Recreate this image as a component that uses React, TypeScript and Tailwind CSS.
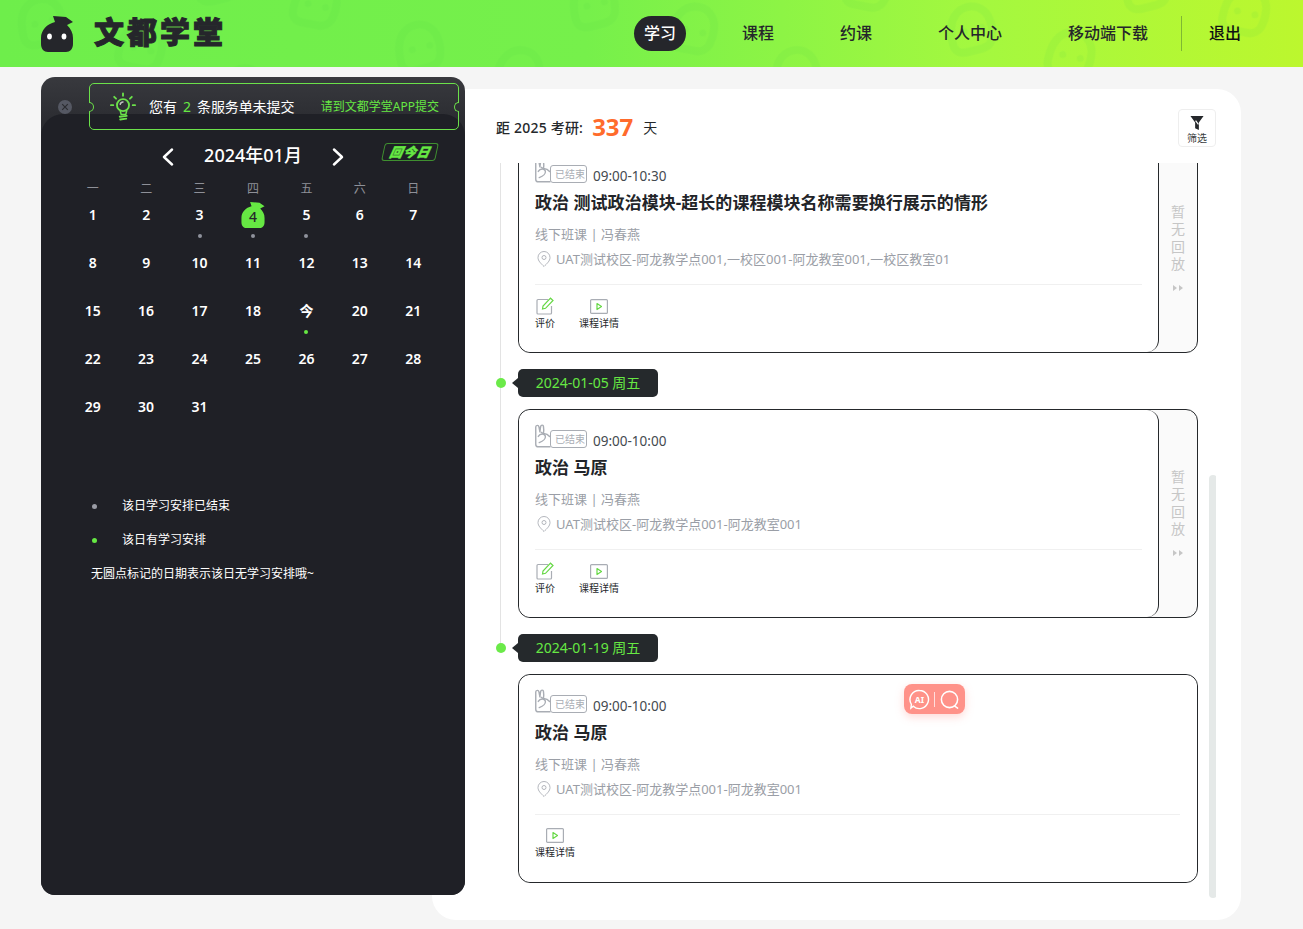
import React from "react";

const FONT = "font-['Noto_Sans','Noto_Sans_CJK_SC',sans-serif]";

const BLOB = "M12 0 L25 1 L32 6 L26 9 C30 13 32 17 32 22 L32 28 C32 33 29 36 25 36 L7 36 C3 36 0 33 0 28 L0 22 C0 14 6 8 14 6 Z";

function Blob({ className, fill, eyes }: { className: string; fill: string; eyes?: boolean }) {
  return (
    <svg viewBox="0 0 32 36" className={className}>
      <path d={BLOB} fill={fill} />
      {eyes && (
        <>
          <ellipse cx="8.5" cy="20.5" rx="2.4" ry="3" fill="#fff" />
          <ellipse cx="23" cy="20.5" rx="2.4" ry="3" fill="#fff" />
        </>
      )}
    </svg>
  );
}

function HeaderPattern() {
  return (
    <svg className="absolute inset-0 w-full h-full pointer-events-none" aria-hidden="true">
      <defs>
        <pattern id="blobs" width="180" height="116" patternUnits="userSpaceOnUse" patternTransform="rotate(-14)">
          <g fill="none" stroke="#4fd04a" strokeOpacity="0.1" strokeWidth="6">
            <g transform="translate(14 4) scale(1.35)">
              <path d="M6 8 C12 2 22 2 27 8 C31 12 32 20 30 28 C29 33 25 36 20 36 L8 36 C3 36 0 33 0 28 C0 20 2 12 6 8 Z" />
            </g>
            <g transform="translate(118 46) rotate(25) scale(1.35)">
              <path d="M6 8 C12 2 22 2 27 8 C31 12 32 20 30 28 C29 33 25 36 20 36 L8 36 C3 36 0 33 0 28 C0 20 2 12 6 8 Z" />
            </g>
          </g>
          <g fill="#4fd04a" fillOpacity="0.1">
            <circle cx="28" cy="32" r="3.5" />
            <circle cx="46" cy="32" r="3.5" />
            <circle cx="118" cy="78" r="3.5" />
            <circle cx="134" cy="86" r="3.5" />
          </g>
        </pattern>
      </defs>
      <rect width="100%" height="100%" fill="url(#blobs)" />
    </svg>
  );
}

function Header() {
  const items = ["课程", "约课", "个人中心", "移动端下载"];
  return (
    <header className="relative h-[67px] shrink-0 overflow-hidden bg-[linear-gradient(90deg,#6eee4b_0%,#76f04b_45%,#a4f83f_75%,#bcf72e_100%)]">
      <HeaderPattern />
      <div className="relative flex h-full items-center pl-[41px] pr-[62px]">
        <Blob className="h-[36px] w-[32px]" fill="#25262b" eyes />
        <span className="mb-[3px] ml-[21px] text-[30px] leading-none font-black tracking-[3px] text-[#25262b] [-webkit-text-stroke:1px_#25262b]">文都学堂</span>
        <nav className="mb-[1px] ml-auto flex items-center text-[16px] font-medium text-[#25262b]">
          <span className="flex h-[35px] w-[52px] items-center justify-center rounded-[18px] bg-[#25262b] text-white">学习</span>
          <div className="ml-[56px] flex gap-[66px]">
            {items.map((t) => (
              <span key={t}>{t}</span>
            ))}
          </div>
          <span className="ml-[33px] h-[35px] w-px bg-[#7fb832]" />
          <span className="ml-[27px] text-[#111]">退出</span>
        </nav>
      </div>
    </header>
  );
}

function Bulb() {
  return (
    <svg viewBox="0 0 28 32" className="h-[30px] w-[26px]" fill="none" stroke="#6be14a" strokeWidth="1.6" strokeLinecap="round">
      <circle cx="14" cy="14" r="6.5" strokeWidth="2" />
      <path d="M11 20 L12 24 L17 24 L18 20" />
      <path d="M10.5 26.5 L18 25.5 M11 29.5 L17.5 28.5" strokeWidth="2" />
      <path d="M14 1.5 V4 M4.5 5 L6.5 7 M23.5 5 L21.5 7 M1 14 H3.5 M24.5 14 H27" strokeWidth="2" />
      <path d="M11 13 C11.5 11 13 10.5 14 10.5" stroke="#fff" strokeOpacity="0.7" />
    </svg>
  );
}

function Chevron({ flip }: { flip?: boolean }) {
  return (
    <svg viewBox="0 0 14 18" className={`h-[18px] w-[14px] ${flip ? "rotate-180" : ""}`} fill="none" stroke="#fff" strokeWidth="2.4" strokeLinecap="round" strokeLinejoin="round">
      <path d="M11 1.5 L3 9 L11 16.5" />
    </svg>
  );
}

const WEEK = ["一", "二", "三", "四", "五", "六", "日"];
const DAYS = Array.from({ length: 31 }, (_, i) => i + 1);

function Day({ d }: { d: number }) {
  const grey = d === 3 || d === 4 || d === 5;
  return (
    <div className="relative flex h-[48px] justify-center pt-[1px]">
      {d === 4 ? (
        <div className="relative h-[26px] w-[24px] -mt-[1px]">
          <Blob className="h-[26px] w-[24px]" fill="#66e843" />
          <span className="absolute inset-0 flex items-center justify-center pt-[3px] text-[14px] font-medium text-[#25262b]">4</span>
        </div>
      ) : (
        <span className="text-[14px] leading-[24px] font-semibold text-white">{d === 19 ? "今" : d}</span>
      )}
      {grey && <span className="absolute left-1/2 top-[32px] h-[4px] w-[4px] -translate-x-1/2 rounded-full bg-[#8f929c]" />}
      {d === 19 && <span className="absolute left-1/2 top-[32px] h-[4px] w-[4px] -translate-x-1/2 rounded-full bg-[#66e843]" />}
    </div>
  );
}

function LeftPanel() {
  return (
    <aside className="relative z-10 flex h-[818px] w-[424px] shrink-0 flex-col overflow-hidden rounded-[14px] bg-[linear-gradient(180deg,#38393e_0%,#2b2c31_45px)]">
      <div className="flex h-[37px] shrink-0" />
      <div className="flex-1 rounded-t-[22px] bg-[#1f2026] px-[25px]">
        <div className="relative flex h-[53px] items-end justify-center">
          <button className="mr-[29px] mb-[1px]"><Chevron /></button>
          <span className="text-[18px] leading-[24px] font-medium text-white">2024年01月</span>
          <button className="ml-[29px] mb-[1px]"><Chevron flip /></button>
          <span className="absolute right-[3px] bottom-[6px] flex h-[18px] w-[54px] -skew-x-12 items-center justify-center rounded-[3px] border border-[#3f8f30] text-[13px] leading-none font-black italic tracking-[0.5px] text-[#66e843] [-webkit-text-stroke:0.4px_#66e843]">回今日</span>
        </div>
        <div className="mt-[13px] grid grid-cols-7 text-center text-[12px] leading-[18px] text-[#8e9098]">
          {WEEK.map((w) => (
            <span key={w}>{w}</span>
          ))}
        </div>
        <div className="mt-[4px] grid grid-cols-7">
          {DAYS.map((d) => (
            <Day key={d} d={d} />
          ))}
        </div>
        <div className="mt-[55px] flex flex-col pl-[25px] text-[12px] leading-[18px] text-white">
          <div className="flex items-center">
            <span className="ml-[1px] h-[5px] w-[5px] rounded-full bg-[#9a9ca5]" />
            <span className="ml-[25px]">该日学习安排已结束</span>
          </div>
          <div className="mt-[16px] flex items-center">
            <span className="ml-[1px] h-[5px] w-[5px] rounded-full bg-[#66e843]" />
            <span className="ml-[25px]">该日有学习安排</span>
          </div>
          <div className="mt-[16px]">无圆点标记的日期表示该日无学习安排哦~</div>
        </div>
      </div>
      {/* 通知条压在面板之上 */}
      <div className="absolute left-[17px] top-[23px] flex h-[14px] w-[14px] items-center justify-center rounded-full bg-[#555863]">
        <svg viewBox="0 0 10 10" className="h-[8px] w-[8px]" stroke="#2b2c31" strokeWidth="1.5">
          <path d="M1.5 1.5 L8.5 8.5 M8.5 1.5 L1.5 8.5" />
        </svg>
      </div>
      <div className="absolute left-[48px] top-[6px] flex h-[47px] w-[370px] items-center rounded-[5px] border border-[#6be14a] pl-[20px] pr-[19px] text-[13px]">
        <span className="absolute -left-px top-[18px] h-[10px] w-[5px] rounded-r-full border border-l-0 border-[#6be14a] bg-[#2f3035]" />
        <span className="absolute -right-px top-[18px] h-[10px] w-[5px] rounded-l-full border border-r-0 border-[#6be14a] bg-[#2f3035]" />
        <Bulb />
        <span className="ml-[13px] text-[14px] text-white">您有</span>
        <span className="ml-[6px] text-[14px] text-[#66e843]">2</span>
        <span className="ml-[6px] text-[14px] tracking-[-0.1px] text-white">条服务单未提交</span>
        <span className="ml-auto text-[12px] text-[#66e843]">请到文都学堂APP提交</span>
      </div>
    </aside>
  );
}

function HandTag() {
  return (
    <div className="relative h-[24px] w-[52px] shrink-0">
      <svg viewBox="0 0 17 25" className="absolute left-0 top-0 h-[24px] w-[16px]" fill="none" stroke="#a9adb4" strokeWidth="1.5" strokeLinejoin="round" strokeLinecap="round">
        <path d="M16 24 H3.5 C1.8 24 0.8 23 0.8 21.2 V3 C0.8 0.8 3.8 0.6 4.2 2.8 L5.2 8 L6 2.4 C6.4 0.4 9 0.5 9 2.6 C9.3 4.5 9.6 7 9 9.8 C11.5 10 14 11 15.5 13" />
        <path d="M3.5 13 C5.5 9.5 10 9.5 11 12.5 C11.5 15 9 18 4.5 19.5" />
        <path d="M6.5 8.5 L9 10" />
      </svg>
      <span className="absolute bottom-0 left-[15px] right-0 flex h-[18px] items-center justify-center rounded-[3px] border border-[#a9adb4] bg-white pl-[3px] text-[10px] leading-none text-[#a9adb4]">已结束</span>
    </div>
  );
}

function EditIcon() {
  return (
    <svg viewBox="0 0 18 18" className="h-[18px] w-[18px]" fill="none" strokeWidth="1.2">
      <path d="M12 2.5 H2 C1.4 2.5 1 3 1 3.5 V16 C1 16.6 1.4 17 2 17 H14.5 C15.1 17 15.5 16.6 15.5 16 V9" stroke="#a9adb4" />
      <path d="M6.5 12 L7 9 L14.5 1.2 L17 3.5 L9.5 11.3 Z" stroke="#66d845" fill="#fff" />
    </svg>
  );
}

function PlayIcon() {
  return (
    <svg viewBox="0 0 18 15" className="h-[15px] w-[18px]" fill="none">
      <rect x="0.6" y="0.6" width="16.8" height="13.8" rx="1" stroke="#a9adb4" strokeWidth="1.2" />
      <path d="M7 4.5 L11.5 7.5 L7 10.5 Z" stroke="#66d845" strokeWidth="1.2" strokeLinejoin="round" />
    </svg>
  );
}

function Pin() {
  return (
    <svg viewBox="0 0 14 16" className="h-[16px] w-[14px] shrink-0" fill="none" stroke="#b3b6bc" strokeWidth="1">
      <path d="M7 15.5 C4 12.5 1 10 1 6.5 A6 6 0 0 1 13 6.5 C13 10 10 12.5 7 15.5 Z" />
      <circle cx="7" cy="6.5" r="2" />
    </svg>
  );
}

type CardData = {
  time: string;
  title: string;
  address: string;
  review: boolean;
};

function Card({ time, title, address, review }: CardData) {
  return (
    <div className="flex h-[209px] overflow-hidden rounded-[12px] border border-[#25282b] bg-[#fafafa]">
      <div className={`min-w-0 flex-1 rounded-[12px] bg-white pl-[16px] pt-[14px] ${review ? "border-r border-[#25282b] pr-[16px]" : "pr-[17px]"}`}>
        <div className="flex h-[24px] items-end">
          <HandTag />
          <span className="relative top-[2px] ml-[6px] text-[13.5px] leading-[18px] text-[#444a50]">{time}</span>
        </div>
        <div className="mt-[7px] text-[17px] leading-[26px] font-bold tracking-[0.04px] text-[#222428]">{title}</div>
        <div className="mt-[8px] text-[13px] leading-[20px] text-[#9a9ea6]">线下班课 | 冯春燕</div>
        <div className="mt-[5px] flex items-center text-[13px] leading-[20px] text-[#9a9ea6]">
          <span className="ml-[2px]"><Pin /></span>
          <span className="ml-[5px]">{address}</span>
        </div>
        <div className="mt-[15px] h-px bg-[#f0f0f0]" />
        {review ? (
          <div className="mt-[12px] flex text-[10px] leading-[14px] text-[#25282b]">
            <div className="flex w-[44px] flex-col">
              <span className="ml-[1px] flex h-[18px] items-end"><EditIcon /></span>
              <span className="mt-[1px]">评价</span>
            </div>
            <div className="flex w-[40px] flex-col items-center">
              <span className="flex h-[17px] items-end"><PlayIcon /></span>
              <span className="mt-[2px] whitespace-nowrap">课程详情</span>
            </div>
          </div>
        ) : (
          <div className="mt-[10px] flex text-[10px] leading-[14px] text-[#25282b]">
            <div className="flex w-[40px] flex-col items-center">
              <span className="flex h-[18px] items-end"><PlayIcon /></span>
              <span className="mt-[2px] whitespace-nowrap">课程详情</span>
            </div>
          </div>
        )}
      </div>
      {review && (
        <div className="flex w-[38px] shrink-0 flex-col items-center pt-[58px] text-[14px] leading-[17.3px] text-[#c6c6c6]">
          <span>暂</span>
          <span>无</span>
          <span>回</span>
          <span>放</span>
          <span className="mt-[13px] flex gap-[1px]">
            <svg viewBox="0 0 10 6" className="h-[6px] w-[10px]" fill="#c6c6c6">
              <path d="M0 0 L4 3 L0 6 Z M6 0 L10 3 L6 6 Z" />
            </svg>
          </span>
        </div>
      )}
    </div>
  );
}

function DateTag({ label }: { label: string }) {
  return (
    <div className="relative flex h-[28px] items-center">
      <span className="absolute -left-[22px] top-[9px] h-[10px] w-[10px] rounded-full bg-[#6bea49]" />
      <span className="absolute -left-[6px] top-[9px] h-0 w-0 border-y-[5px] border-r-[6px] border-y-transparent border-r-[#25292c]" />
      <span className="flex h-[28px] w-[140px] items-center justify-center rounded-[5px] bg-[#25292c] pb-[1px] text-[14px] text-[#66e843]">{label}</span>
    </div>
  );
}

function RightPanel() {
  return (
    <section className="relative -ml-[33px] mt-[12px] flex h-[831px] w-[809px] shrink-0 flex-col overflow-hidden rounded-[24px] bg-white pl-[64px] pr-[25px]">
      <div className="flex h-[74px] shrink-0 items-center">
        <span className="relative top-[1px] text-[14px] font-medium tracking-[0.2px] text-[#25282b]">距 2025 考研:</span>
        <span className="relative top-[1px] ml-[9px] text-[24px] leading-none font-bold text-[#ff6b2c]">337</span>
        <span className="relative top-[1px] ml-[10px] text-[14px] text-[#25282b]">天</span>
        <button className="ml-auto mt-[3px] flex h-[38px] w-[38px] flex-col items-center rounded-[4px] border border-[#eeeeee] pt-[6px]">
          <svg viewBox="0 0 14 16" className="h-[15px] w-[14px]">
            <path d="M0 0 H14 L9 7 V15 L5 13 V7 Z" fill="#25282b" />
            <path d="M5.5 5 L8.5 9" stroke="#fff" strokeWidth="1.2" />
          </svg>
          <span className="mt-[1px] text-[10px] leading-[12px] text-[#3a3d40]">筛选</span>
        </button>
      </div>
      <div className="relative flex-1 overflow-hidden pl-[22px]">
        <span className="absolute left-[4px] top-0 h-[485px] w-px bg-[#e3e3e3]" />
        <div className="-mt-[19px] flex w-[680px] flex-col">
          <Card time="09:00-10:30" title="政治 测试政治模块-超长的课程模块名称需要换行展示的情形" address="UAT测试校区-阿龙教学点001,一校区001-阿龙教室001,一校区教室01" review />
          <div className="mt-[16px]"><DateTag label="2024-01-05 周五" /></div>
          <div className="mt-[12px]">
            <Card time="09:00-10:00" title="政治 马原" address="UAT测试校区-阿龙教学点001-阿龙教室001" review />
          </div>
          <div className="mt-[16px]"><DateTag label="2024-01-19 周五" /></div>
          <div className="mt-[12px]">
            <Card time="09:00-10:00" title="政治 马原" address="UAT测试校区-阿龙教学点001-阿龙教室001" review={false} />
          </div>
        </div>
        <span className="absolute -right-px top-[312px] h-[423px] w-[8px] rounded-full bg-[#e5e9e8]" />
      </div>
      <div className="absolute left-[472px] top-[595px] flex h-[30px] w-[61px] items-center justify-center gap-[4px] rounded-[8px] bg-[#ff9289] shadow-[0_3px_8px_rgba(255,146,137,0.35)]">
        <svg viewBox="0 0 22 22" className="h-[21px] w-[21px]" fill="none" stroke="#fff" strokeWidth="1.5">
          <path d="M11 1.5 A9.5 9.5 0 1 1 4.5 18 L2 20 L2.5 16 A9.5 9.5 0 0 1 11 1.5 Z" />
          <text x="11" y="14.5" textAnchor="middle" fontSize="9" fontWeight="700" fill="#fff" stroke="none">AI</text>
        </svg>
        <span className="h-[15px] w-px bg-white/70" />
        <svg viewBox="0 0 22 22" className="h-[21px] w-[21px]" fill="none" stroke="#fff" strokeWidth="1.6" strokeLinecap="round">
          <circle cx="11" cy="11" r="8.5" />
          <path d="M16.5 18 L19.5 20" />
        </svg>
      </div>
    </section>
  );
}

export default function App() {
  return (
    <div className={`flex h-[929px] flex-col overflow-hidden bg-[#f5f5f5] ${FONT}`}>
      <Header />
      <main className="flex items-start pl-[41px] pt-[10px]">
        <LeftPanel />
        <RightPanel />
      </main>
    </div>
  );
}
